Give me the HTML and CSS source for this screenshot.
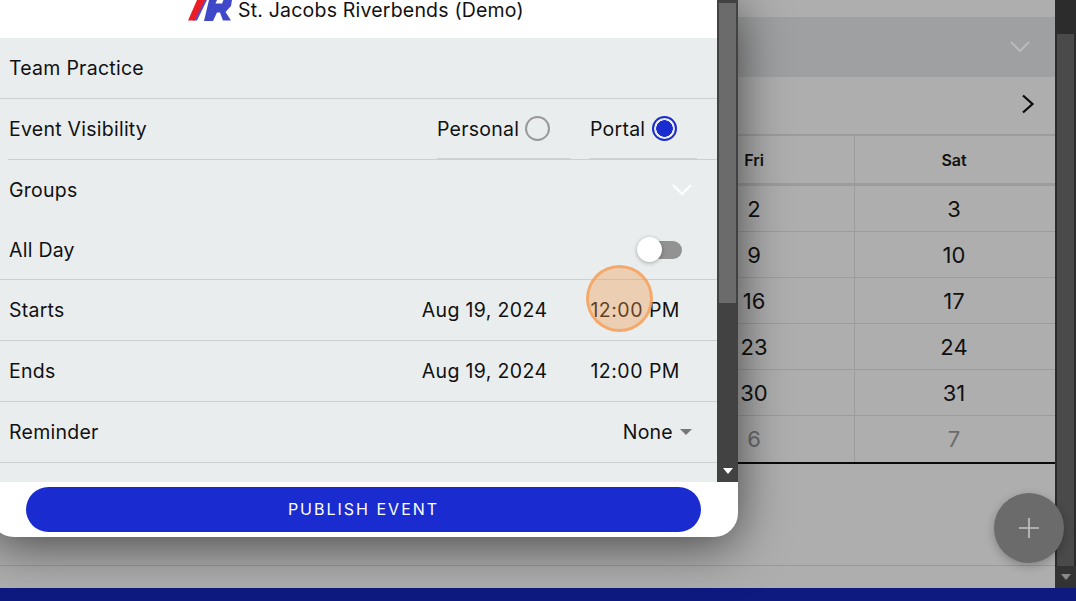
FILE: index.html
```html
<!DOCTYPE html>
<html lang="en">
<head>
<meta charset="utf-8">
<title>Create Event</title>
<link rel="stylesheet" href="styles.css">
</head>
<body>
<div class="app">
  <div class="stage">
    <main class="page">
      <div class="band"><svg class="band-chev" viewBox="0 0 20 12" width="20" height="12"><path d="M1 1l9 9 9-9" fill="none" stroke="#b9bbbc" stroke-width="2"/></svg></div>
      <div class="month"><svg viewBox="0 0 14 20" width="14" height="20"><path d="M2 1.500l9.500 8.500-9.500 8.500" fill="none" stroke="#0a0a0a" stroke-width="2.200"/></svg></div>
      <div class="cal">
        <div class="cell head">Fri</div><div class="cell head">Sat</div>
        <div class="cell">2</div><div class="cell">3</div>
        <div class="cell">9</div><div class="cell">10</div>
        <div class="cell">16</div><div class="cell">17</div>
        <div class="cell">23</div><div class="cell">24</div>
        <div class="cell">30</div><div class="cell">31</div>
        <div class="cell muted">6</div><div class="cell muted">7</div>
      </div>
      <div class="after"></div>
    </main>
    <div class="page-scroll">
      <div class="page-thumb"></div>
      <div class="page-arrow"><span class="tri-dim"></span></div>
    </div>
    <div class="fab"><svg viewBox="0 0 20 20" width="20" height="20"><path d="M10 0v20M0 10h20" stroke="#c4c4c4" stroke-width="1.600"/></svg></div>
  </div>
  <div class="bar"></div>
</div>

<section class="modal">
  <div class="modal-mid">
    <div class="modal-content">
      <header class="modal-head">
        <svg class="logo" viewBox="0 0 46 21" width="46" height="21">
          <path d="M13 0h7L10 20.500H6z" fill="#4a50cc"/>
          <path d="M10 0h8L7.500 20.500H1z" fill="#ec1c24"/>
          <path d="M22 0h23l-1 6-5.500 6 5.500 8.500h-8l-3-8h-3l-4 8.500h-9z" fill="#3f48c8"/>
          <path d="M30 0h6.500l-1.500 3.500h-6.500z" fill="#fff"/>
        </svg>
        <span>St. Jacobs Riverbends (Demo)</span>
      </header>
      <div class="form">
        <div class="row line-full"><span>Team Practice</span></div>
        <div class="row line-inset">
          <span class="grow">Event Visibility</span>
          <div class="radio-opt opt-personal"><span>Personal</span><i class="radio"></i></div>
          <div class="radio-opt opt-portal"><span>Portal</span><i class="radio on"></i></div>
        </div>
        <div class="row short">
          <span class="grow">Groups</span>
          <svg class="chev" viewBox="0 0 20 12" width="20" height="12"><path d="M1 1l9 9 9-9" fill="none" stroke="#fff" stroke-width="2"/></svg>
        </div>
        <div class="row line-full short">
          <span class="grow">All Day</span>
          <div class="toggle"><i class="knob"></i></div>
        </div>
        <div class="row line-full">
          <span class="grow">Starts</span><span class="date">Aug 19, 2024</span><span class="time">12:00 PM</span>
        </div>
        <div class="row line-full">
          <span class="grow">Ends</span><span class="date">Aug 19, 2024</span><span class="time">12:00 PM</span>
        </div>
        <div class="row line-full">
          <span class="grow">Reminder</span><span>None</span><i class="caret"></i>
        </div>
      </div>
    </div>
    <div class="modal-scroll">
      <div class="modal-thumb"></div>
      <div class="modal-track"><i class="tri-white"></i></div>
    </div>
  </div>
  <footer class="modal-foot"><button class="publish" type="button">PUBLISH EVENT</button></footer>
</section>

<div class="click-mark"></div>
</body>
</html>
```
FILE: styles.css
```css
* { box-sizing: border-box; }
html, body { margin: 0; height: 601px; overflow: hidden; }
body { font-family: "Inter", "Liberation Sans", sans-serif; position: relative; background: #aeaeae; }

.app { height: 601px; display: flex; flex-direction: column; }
.stage { flex: 0 0 588px; display: flex; position: relative; }
.bar { flex: 1; background: #0f1a80; }

.page { flex: 1; padding-top: 17px; background: #aeaeae; display: flex; flex-direction: column; }
.band { height: 60px; background: #9fa0a1; display: flex; align-items: center; justify-content: flex-end; padding-right: 25px; }
.month { height: 59px; border-bottom: 2px solid #9c9c9c; display: flex; align-items: center; justify-content: flex-end; padding: 0 20px 4px 0; }
.cal { display: grid; grid-template-columns: 201px 200px; justify-content: end; border-bottom: 2px solid #0a0a0a; }
.cell { height: 46px; display: flex; align-items: center; justify-content: center; font-size: 22px; color: #111; border-bottom: 1px solid #9c9c9c; }
.cell:nth-child(odd) { border-right: 1px solid #9c9c9c; }
.cell:nth-child(even) { padding-right: 2px; }
.cell:nth-last-child(-n+2) { border-bottom: 0; }
.head { height: 50px; font-size: 16px; font-weight: 600; border-bottom: 3px solid #9c9c9c; }
.muted { color: #6a6a6a; }
.after { height: 102px; border-bottom: 1px solid #9a9a9a; }

.page-scroll { flex: 0 0 21px; background: #2c2c2c; padding-top: 34px; display: flex; flex-direction: column; }
.page-thumb { flex: 1; background: #4a4a4a; margin-left: 2px; margin-right: 2px; }
.page-arrow { height: 22px; background: #333; display: flex; align-items: center; justify-content: center; }
.tri-dim { border: 5px solid transparent; border-top: 6px solid #8a8a8a; border-bottom: 0; }

.fab { position: absolute; left: 994px; top: 493px; width: 70px; height: 70px; border-radius: 50%; background: #6b6b6b; box-shadow: 0 3px 10px rgba(0,0,0,.25); display: flex; align-items: center; justify-content: center; }

.modal { position: absolute; left: -10px; top: 0; width: 748px; height: 537px; background: #fff; border-radius: 0 0 24px 24px; box-shadow: 0 8px 50px rgba(0,0,0,.6); display: flex; flex-direction: column; overflow: hidden; font-size: 19.500px; color: #111; letter-spacing: .25px; }
.modal-mid { flex: 1; display: flex; min-height: 0; }
.modal-content { flex: 1; display: flex; flex-direction: column; }
.modal-head { height: 38px; flex: none; display: flex; align-items: flex-start; padding-left: 197px; }
.modal-head span { margin: 0 0 0 5px; line-height: 21px; white-space: nowrap; letter-spacing: .2px; }
.logo { flex: none; }
.form { flex: 1; background: #e9edee; display: flex; flex-direction: column; }
.row { height: 61px; flex: none; display: flex; align-items: center; padding: 0 38px 0 19px; position: relative; }
.short { height: 60px; }
.grow { flex: 1; }
.line-full { border-bottom: 1px solid #cdd0d1; }
.line-inset { padding-bottom: 2px; }
.line-inset::after { content: ""; position: absolute; left: 18px; right: 0; bottom: 0; height: 1px; background: #cdd0d1; }

.radio-opt { display: flex; align-items: center; gap: 6px; position: relative; }
.opt-personal { width: 133px; margin-right: 20px; }
.opt-portal { width: 107px; margin-right: -18px; gap: 7px; }
.radio-opt::after { content: ""; position: absolute; left: 0; right: 0; top: 42px; height: 2px; background: #cdd0d1; }
.radio { width: 25px; height: 25px; border-radius: 50%; border: 2px solid #999; flex: none; }
.radio.on { border-color: #1a2ccf; background: radial-gradient(circle, #1a2ccf 0 8px, transparent 8.500px); }
.chev { margin-right: -13px; }
.toggle { width: 32px; height: 18px; border-radius: 9px; background: #929292; position: relative; margin-right: -3px; }
.knob { position: absolute; left: -13px; top: -3.500px; width: 25px; height: 25px; border-radius: 50%; background: #fff; box-shadow: 0 1px 4px rgba(0,0,0,.3); }
.date { margin-right: 43px; letter-spacing: .35px; }
.time { letter-spacing: .5px; margin-right: -1px; }
.caret { margin-left: 7px; margin-right: -13px; border: 6px solid transparent; border-top: 6px solid #777; border-bottom: 0; }

.modal-scroll { flex: 0 0 21px; background: #424242; display: flex; flex-direction: column; padding-top: 3px; }
.modal-thumb { height: 300px; background: #6b6b6b; margin: 0 2px; }
.modal-track { flex: 1; display: flex; align-items: flex-end; justify-content: center; padding-bottom: 8px; }
.tri-white { border: 5px solid transparent; border-top: 6px solid #fff; border-bottom: 0; }

.modal-foot { height: 55px; flex: none; padding: 5px 37px 5px 36px; }
.publish { width: 100%; height: 45px; padding: 0 0 2px; border: 0; border-radius: 23px; background: #1a2ccf; color: #fff; font: inherit; font-size: 16px; letter-spacing: 2px; }

.click-mark { position: absolute; left: 586px; top: 265px; width: 67px; height: 67px; border-radius: 50%; background: rgba(244,150,70,.35); border: 3px solid rgba(245,160,90,.8); }
```
